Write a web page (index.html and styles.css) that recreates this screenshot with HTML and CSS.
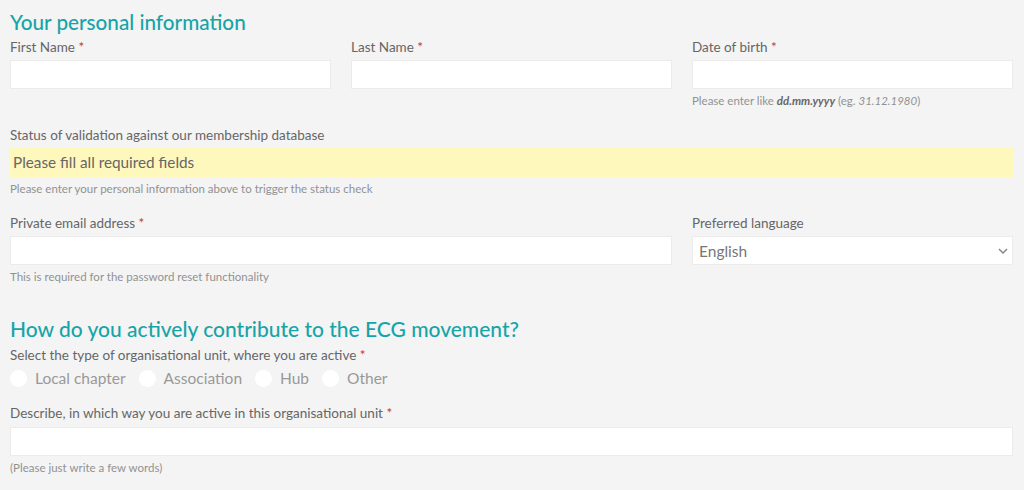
FILE: index.html
```html
<!DOCTYPE html>
<html lang="en">
<head>
  <meta charset="UTF-8">
  <title>Membership registration</title>
  <link rel="stylesheet" href="styles.css">
</head>
<body>
  <form class="signup">
    <h2 class="section-title">Your personal information</h2>

    <div class="row">
      <div class="field">
        <label>First Name <span class="req">*</span></label>
        <input type="text" class="input">
      </div>
      <div class="field">
        <label>Last Name <span class="req">*</span></label>
        <input type="text" class="input">
      </div>
      <div class="field">
        <label>Date of birth <span class="req">*</span></label>
        <input type="text" class="input">
        <p class="hint">Please enter like <b><i>dd.mm.yyyy</i></b> (eg. <i>31.12.1980</i>)</p>
      </div>
    </div>

    <div class="field status-field">
      <label>Status of validation against our membership database</label>
      <div class="status-box">Please fill all required fields</div>
      <p class="hint">Please enter your personal information above to trigger the status check</p>
    </div>

    <div class="row email-row">
      <div class="field span-2">
        <label>Private email address <span class="req">*</span></label>
        <input type="email" class="input">
        <p class="hint">This is required for the password reset functionality</p>
      </div>
      <div class="field">
        <label>Preferred language</label>
        <div class="select-wrap">
          <select class="input select">
            <option>English</option>
            <option>Deutsch</option>
          </select>
          <svg class="chevron" width="10" height="6" viewBox="0 0 10 6"><path d="M1 1l4 4 4-4" fill="none" stroke="#888" stroke-width="1.5"/></svg>
        </div>
      </div>
    </div>

    <h2 class="section-title second">How do you actively contribute to the ECG movement?</h2>

    <div class="field">
      <label>Select the type of organisational unit, where you are active <span class="req">*</span></label>
      <div class="radios">
        <label class="radio"><input type="radio" name="unit"><span class="dot"></span>Local chapter</label>
        <label class="radio"><input type="radio" name="unit"><span class="dot"></span>Association</label>
        <label class="radio"><input type="radio" name="unit"><span class="dot"></span>Hub</label>
        <label class="radio"><input type="radio" name="unit"><span class="dot"></span>Other</label>
      </div>
    </div>

    <div class="field describe">
      <label>Describe, in which way you are active in this organisational unit <span class="req">*</span></label>
      <input type="text" class="input">
      <p class="hint">(Please just write a few words)</p>
    </div>
  </form>
</body>
</html>
```

FILE: styles.css
```css
body {
  margin: 0;
  background-color: #f4f4f4;
  font-family: Lato, 'Open Sans', sans-serif;
  color: #555;
}

.signup {
  padding: 8px 11px 0 10px;
}

.section-title {
  margin: 0 0 2px;
  font-size: 20.7px;
  font-weight: 500;
  color: #16a4a8;
  line-height: 28px;
}

.section-title.second {
  margin: 31px 0 3px;
  font-size: 21px;
}

.row {
  display: grid;
  grid-template-columns: 1fr 1fr 1fr;
  column-gap: 20px;
}

.span-2 {
  grid-column: span 2;
}

.field label {
  display: block;
  font-size: 13.5px;
  line-height: 18px;
  color: #666;
  margin-bottom: 4px;
}

.req {
  color: #c0392b;
}

.input {
  display: block;
  box-sizing: border-box;
  width: 100%;
  height: 29px;
  margin: 0;
  border: 1px solid #ebebeb;
  background: #fff;
  font-family: inherit;
  font-size: 15.5px;
  color: #777;
  padding: 0 6px;
  outline: none;
}

.hint {
  margin: 5px 0 0;
  font-size: 11.5px;
  line-height: 14px;
  color: #929292;
}

.hint b {
  color: #666;
}

.status-field {
  margin-top: 18px;
}

.status-box {
  background-color: #fff8bd;
  height: 29px;
  line-height: 29px;
  padding: 0 3px;
  font-size: 15.3px;
  color: #666;
}

.email-row {
  margin-top: 18px;
}

.select-wrap {
  position: relative;
}

.select {
  appearance: none;
  -webkit-appearance: none;
}

.chevron {
  position: absolute;
  right: 5px;
  top: 12px;
}

.radios {
  display: flex;
  align-items: center;
  gap: 13px;
  margin-top: 1px;
}

.field .radio {
  display: flex;
  align-items: center;
  gap: 8px;
  font-size: 15.5px;
  line-height: 20px;
  color: #999;
  margin: 0;
}

.radio input {
  display: none;
}

.dot {
  width: 17px;
  height: 17px;
  border-radius: 50%;
  background: #fff;
}

.describe {
  margin-top: 16px;
}

.describe label {
  margin-bottom: 5px;
}
```
